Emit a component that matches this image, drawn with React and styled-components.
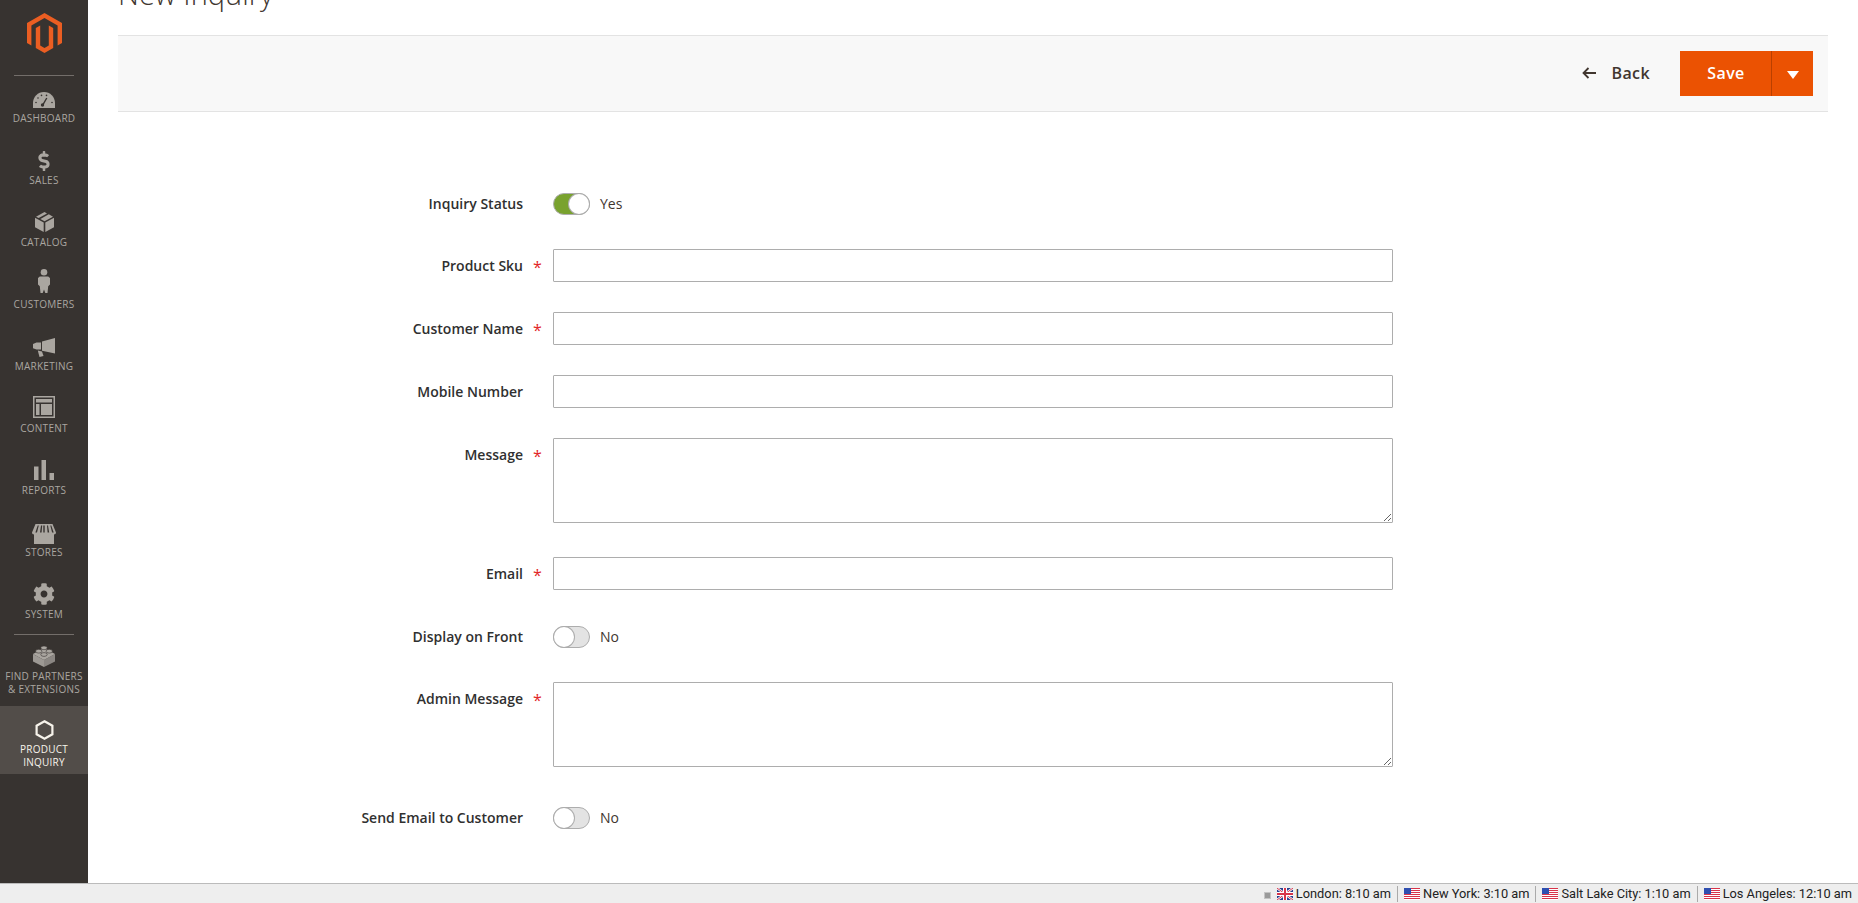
import React from 'react';
import styled, { createGlobalStyle } from 'styled-components';
import { FaDollarSign, FaCog } from 'react-icons/fa';

const GlobalStyle = createGlobalStyle`
  html, body {
    margin: 0;
    padding: 0;
    background: #fff;
    font-family: "Open Sans", "Liberation Sans", sans-serif;
    overflow: hidden;
  }
`;

const Page = styled.div`
  display: flex;
  flex-direction: column;
  height: 903px;
  overflow: hidden;
`;

const Body = styled.div`
  display: flex;
  flex: 1;
  min-height: 0;
`;

const Sidebar = styled.nav`
  width: 88px;
  flex-shrink: 0;
  background: #373330;
  display: flex;
  flex-direction: column;
`;

const LogoBox = styled.div`
  height: 75px;
  display: flex;
  justify-content: center;
  padding-top: 13px;
  box-sizing: border-box;
`;

const Divider = styled.div`
  height: 1px;
  margin: 0 14px;
  background: #736e6a;
`;

const Item = styled.a`
  display: flex;
  flex-direction: column;
  align-items: center;
  box-sizing: border-box;
  height: ${p => p.$height || 62}px;
  padding-top: ${p => p.$top || 13}px;
  background: ${p => (p.$active ? '#524d49' : 'transparent')};
  color: ${p => (p.$active ? '#f7f3eb' : '#aaa6a0')};
`;

const IconSlot = styled.span`
  height: 22px;
  display: flex;
  align-items: center;
  justify-content: center;
  margin-bottom: ${p => p.$gap}px;
`;

const ItemLabel = styled.span`
  font-size: 10px;
  line-height: 13px;
  letter-spacing: 0.25px;
  text-align: center;
  text-transform: uppercase;
  white-space: pre-line;
`;

const Main = styled.main`
  flex: 1;
  min-width: 0;
  padding: 0 30px;
`;

const Title = styled.h1`
  margin: -25px 0 22px;
  font-size: 29px;
  line-height: 38px;
  font-weight: 300;
  color: #41362f;
`;

const ActionBar = styled.div`
  height: 77px;
  box-sizing: border-box;
  background: #f8f8f8;
  border-top: 1px solid #e3e3e3;
  border-bottom: 1px solid #e3e3e3;
  display: flex;
  align-items: center;
  justify-content: flex-end;
  padding-right: 15px;
`;

const BackButton = styled.button`
  display: flex;
  align-items: center;
  gap: 15px;
  margin-right: 30px;
  padding: 0 0 2px;
  border: 0;
  background: none;
  font: 600 16px "Open Sans", sans-serif;
  letter-spacing: 0.4px;
  color: #41362f;
`;

const SplitButton = styled.div`
  display: flex;
  height: 45px;
  background: #eb5202;
  color: #fff;
`;

const SaveButton = styled.button`
  width: 91px;
  padding: 0 0 2px 1px;
  border: 0;
  background: none;
  color: inherit;
  font: 600 16px "Open Sans", sans-serif;
  letter-spacing: 0.4px;
`;

const CaretButton = styled.button`
  width: 42px;
  padding: 0;
  border: 0;
  border-left: 1px solid #ba4000;
  background: none;
  display: flex;
  align-items: center;
  justify-content: center;
`;

const Caret = styled.span`
  width: 0;
  height: 0;
  margin-top: 3px;
  border-left: 6px solid transparent;
  border-right: 6px solid transparent;
  border-top: 8px solid #fff;
`;

const Form = styled.form`
  display: flex;
  flex-direction: column;
  padding-top: 81px;
`;

const Row = styled.div`
  display: grid;
  grid-template-columns: 405px 30px 840px;
  margin-top: ${p => (p.$toggle ? 6 : 0)}px;
  margin-bottom: ${p => (p.$toggle || p.$tall ? 34 : 30)}px;
  &:first-child {
    margin-top: 0;
  }
`;

const Label = styled.label`
  text-align: right;
  font-size: 14px;
  font-weight: 600;
  line-height: ${p => (p.$toggle ? 22 : 33)}px;
  color: #303030;
`;

const Required = styled.span`
  height: 33px;
  padding-left: 10px;
  font-size: 16px;
  font-weight: 400;
  line-height: 37px;
  color: #e22626;
`;

const TextInput = styled.input`
  display: block;
  box-sizing: border-box;
  width: 100%;
  height: 33px;
  border: 1px solid #adadad;
  border-radius: 1px;
  background: #fff;
`;

const TextArea = styled.textarea`
  display: block;
  box-sizing: border-box;
  width: 100%;
  height: 85px;
  border: 1px solid #adadad;
  border-radius: 1px;
  background: #fff;
  resize: vertical;
`;

const ToggleWrap = styled.div`
  display: flex;
  align-items: center;
  gap: 10px;
  height: 22px;
  font-size: 14px;
  color: #41362f;
`;

const ToggleText = styled.span`
  margin-bottom: 2px;
`;

const Track = styled.span`
  display: flex;
  justify-content: ${p => (p.$on ? 'flex-end' : 'flex-start')};
  box-sizing: border-box;
  width: 37px;
  height: 22px;
  border: 1px solid #adadad;
  border-radius: 11px;
  background: ${p => (p.$on ? '#79a22e' : '#e3e3e3')};
`;

const Knob = styled.span`
  box-sizing: border-box;
  width: 20px;
  height: 20px;
  border-radius: 50%;
  background: #fff;
  box-shadow: 0 0 0 1px #adadad;
`;

const StatusBar = styled.footer`
  height: 20px;
  box-sizing: border-box;
  background: #eee;
  border-top: 1px solid #bbb;
  display: flex;
  align-items: center;
  justify-content: flex-end;
  font-family: Roboto, "Open Sans", sans-serif;
  font-size: 12.8px;
  color: #222;
`;

const Clock = styled.span`
  display: flex;
  align-items: center;
  gap: 3px;
  height: 16px;
  padding: 0 6px;
  white-space: nowrap;
  & + & {
    border-left: 1px solid #aaa;
  }
`;

const Tiny = styled.span`
  width: 5px;
  height: 5px;
  margin-top: 3px;
  background: #9a9a9a;
  border: 1px solid #c4c4c4;
`;

const Logo = () => (
  <svg width="35" height="40" viewBox="0 0 35 40">
    <path fill="#eb5e22" d="M17.5 0L35 10v20l-4.4 2.6V12.6L17.5 5 4.4 12.6v20L0 30V10z" />
    <path fill="#eb5e22" d="M8.8 15l4.4-2.4v20l4.3 2.4 4.3-2.4v-20l4.4 2.4v20L17.5 40l-8.7-5z" />
  </svg>
);

const fill = '#aaa6a0';
const dark = '#373330';

const icons = {
  dashboard: (
    <svg width="22" height="16" viewBox="0 0 22 16">
      <path fill={fill} d="M0 16V11C0 4.900 4.900 0 11 0s11 4.900 11 11v5z" />
      <path stroke={dark} strokeWidth="1.4" d="M9.500 13.300L13.800 6" />
      <circle cx="9.500" cy="13" r="1.700" fill={dark} />
      <g fill={dark}>
        <circle cx="3" cy="10.500" r=".8" />
        <circle cx="5" cy="6" r=".8" />
        <circle cx="8.500" cy="3.400" r=".8" />
        <circle cx="13.500" cy="3.400" r=".8" />
        <circle cx="19" cy="10.500" r=".8" />
      </g>
    </svg>
  ),
  sales: <FaDollarSign size={20} color={fill} />,
  catalog: (
    <svg width="19" height="20" viewBox="0 0 19 20">
      <path fill={fill} d="M0 5.700L8.700 10.500V20L0 15.200z" />
      <path fill={fill} d="M19 5.700L10.300 10.500V20L19 15.200z" />
      <path fill={fill} d="M9.500 0l2.500 1.400-8.300 4.700-2.700-1.400z" />
      <path fill={fill} d="M13.800 2.300L18 4.700 9.500 9.300 5.400 7z" />
    </svg>
  ),
  customers: (
    <svg width="12" height="24" viewBox="0 0 12 24">
      <circle cx="6" cy="3.300" r="3.300" fill={fill} />
      <path fill={fill} d="M1.800 7.500h8.400L12 9v6.500l-1.800 1.700-.7 6.800H7.300L6 20.500 4.700 24H2.500l-.7-6.800L0 15.500V9z" />
    </svg>
  ),
  marketing: (
    <svg width="22" height="19" viewBox="0 0 22 19">
      <path fill={fill} d="M22 0v15.500L9 12.700V3.500z" />
      <path fill={fill} d="M3.500 4.500H8v7H3.500L0 10.300V6z" />
      <path fill={fill} d="M4.800 12.500l4.200.9 1.500 4.600-4 1z" />
    </svg>
  ),
  content: (
    <svg width="22" height="22" viewBox="0 0 22 22">
      <path fill={fill} fillRule="evenodd" d="M0 0h22v22H0zM1.500 1.500v19h19v-19z" />
      <path fill={fill} d="M3 3h16v3.500H3zM3 8h3.500v11H3zM8 8h11v11H8z" />
    </svg>
  ),
  reports: (
    <svg width="20" height="20" viewBox="0 0 20 20">
      <path fill={fill} d="M0 6.500h4.500V20H0zM7.500 0H12v20H7.500zM15.500 13H20v7h-4.500z" />
    </svg>
  ),
  stores: (
    <svg width="24" height="20" viewBox="0 0 24 20">
      <path fill={fill} fillRule="evenodd" d="M3.500 0h17L24 8.500c0 1.300-.800 2-2 2V20H2V10.500c-1.200 0-2-.7-2-2zM5.700 1.500L3.400 8.500H5L6.800 1.500zM9 1.500L8 8.500h1.600L10.200 1.500zM12.700 1.500h-1.400v7h1.400zM15 1.500l.6 7H17.200L16 1.500zM18.300 1.500l1.800 7h1.600L19.300 1.500z" />
    </svg>
  ),
  system: <FaCog size={22} color={fill} />,
  partners: (
    <svg width="22" height="22" viewBox="0 0 22 22">
      <path fill="#9d9994" d="M0 9l11 6v7L0 16.500z" />
      <path fill="#8b8783" d="M22 9l-11 6v7l11-5.500z" />
      <path fill={fill} d="M11 3l11 6-11 6L0 9z" />
      <g fill={fill} stroke={dark} strokeWidth=".6">
        <ellipse cx="11" cy="2.800" rx="3.200" ry="1.900" />
        <ellipse cx="5.800" cy="6.200" rx="3.200" ry="1.900" />
        <ellipse cx="16.200" cy="6.200" rx="3.200" ry="1.900" />
        <ellipse cx="11" cy="9.500" rx="3.200" ry="1.900" />
      </g>
    </svg>
  ),
  inquiry: (
    <svg width="19" height="20" viewBox="0 0 19 20">
      <path fill="none" stroke="#f7f3eb" strokeWidth="2.200" d="M9.500 1.300l7.900 4.400v8.600l-7.900 4.400-7.900-4.400V5.700z" />
    </svg>
  ),
};

const UkFlag = () => (
  <svg width="16" height="12" viewBox="0 0 16 12">
    <rect width="16" height="12" fill="#2a3f8f" />
    <path stroke="#fff" strokeWidth="2.400" d="M0 0l16 12M16 0L0 12" />
    <path stroke="#d8344a" strokeWidth="1" d="M0 0l16 12M16 0L0 12" />
    <path stroke="#fff" strokeWidth="4" d="M8 0v12M0 6h16" />
    <path stroke="#d8344a" strokeWidth="2" d="M8 0v12M0 6h16" />
  </svg>
);

const UsFlag = () => (
  <svg width="16" height="12" viewBox="0 0 16 12">
    <rect width="16" height="12" fill="#fff" />
    <path stroke="#d8344a" strokeWidth="1" d="M0 .5h16M0 2.500h16M0 4.500h16M0 6.500h16M0 8.500h16M0 10.500h16" />
    <rect width="7" height="6" fill="#2f4fb0" />
  </svg>
);

// top is each icon's own distance from the top of its row
const navItems = [
  { key: 'dashboard', label: 'Dashboard', top: 13 },
  { key: 'sales', label: 'Sales', top: 12 },
  { key: 'catalog', label: 'Catalog', top: 11 },
  { key: 'customers', label: 'Customers', top: 8 },
  { key: 'marketing', label: 'Marketing', top: 12 },
  { key: 'content', label: 'Content', top: 10 },
  { key: 'reports', label: 'Reports', top: 11 },
  { key: 'stores', label: 'Stores', top: 13 },
  { key: 'system', label: 'System', top: 11 },
];

const clocks = [
  { city: 'London: 8:10 am', flag: <UkFlag /> },
  { city: 'New York: 3:10 am', flag: <UsFlag /> },
  { city: 'Salt Lake City: 1:10 am', flag: <UsFlag /> },
  { city: 'Los Angeles: 12:10 am', flag: <UsFlag /> },
];

function Toggle({ on }) {
  return (
    <ToggleWrap>
      <Track $on={on}>
        <Knob />
      </Track>
      <ToggleText>{on ? 'Yes' : 'No'}</ToggleText>
    </ToggleWrap>
  );
}

function Field({ label, required, multiline }) {
  return (
    <Row $tall={multiline}>
      <Label>{label}</Label>
      {required ? <Required>*</Required> : <span />}
      {multiline ? <TextArea /> : <TextInput type="text" />}
    </Row>
  );
}

function ToggleField({ label, on }) {
  return (
    <Row $toggle>
      <Label $toggle>{label}</Label>
      <span />
      <Toggle on={on} />
    </Row>
  );
}

export default function App() {
  return (
    <Page>
      <GlobalStyle />
      <Body>
        <Sidebar>
          <LogoBox>
            <Logo />
          </LogoBox>
          <Divider />
          {navItems.map(item => (
            <Item key={item.key} $top={item.top}>
              <IconSlot $gap={14 - item.top}>{icons[item.key]}</IconSlot>
              <ItemLabel>{item.label}</ItemLabel>
            </Item>
          ))}
          <Divider />
          <Item $height={71} $top={10}>
            <IconSlot $gap={3}>{icons.partners}</IconSlot>
            <ItemLabel>{'Find Partners\n& Extensions'}</ItemLabel>
          </Item>
          <Item $active $height={68} $top={13}>
            <IconSlot $gap={2}>{icons.inquiry}</IconSlot>
            <ItemLabel>{'Product\nInquiry'}</ItemLabel>
          </Item>
        </Sidebar>
        <Main>
          <Title>New Inquiry</Title>
          <ActionBar>
            <BackButton>
              <svg width="14" height="12" viewBox="0 0 14 12">
                <path fill="none" stroke="#41362f" strokeWidth="1.800" d="M14 6H2M6.500 1L1.500 6l5 5" />
              </svg>
              Back
            </BackButton>
            <SplitButton>
              <SaveButton>Save</SaveButton>
              <CaretButton>
                <Caret />
              </CaretButton>
            </SplitButton>
          </ActionBar>
          <Form>
            <ToggleField label="Inquiry Status" on />
            <Field label="Product Sku" required />
            <Field label="Customer Name" required />
            <Field label="Mobile Number" />
            <Field label="Message" required multiline />
            <Field label="Email" required />
            <ToggleField label="Display on Front" />
            <Field label="Admin Message" required multiline />
            <ToggleField label="Send Email to Customer" />
          </Form>
        </Main>
      </Body>
      <StatusBar>
        <Tiny />
        {clocks.map(c => (
          <Clock key={c.city}>
            {c.flag}
            {c.city}
          </Clock>
        ))}
      </StatusBar>
    </Page>
  );
}
